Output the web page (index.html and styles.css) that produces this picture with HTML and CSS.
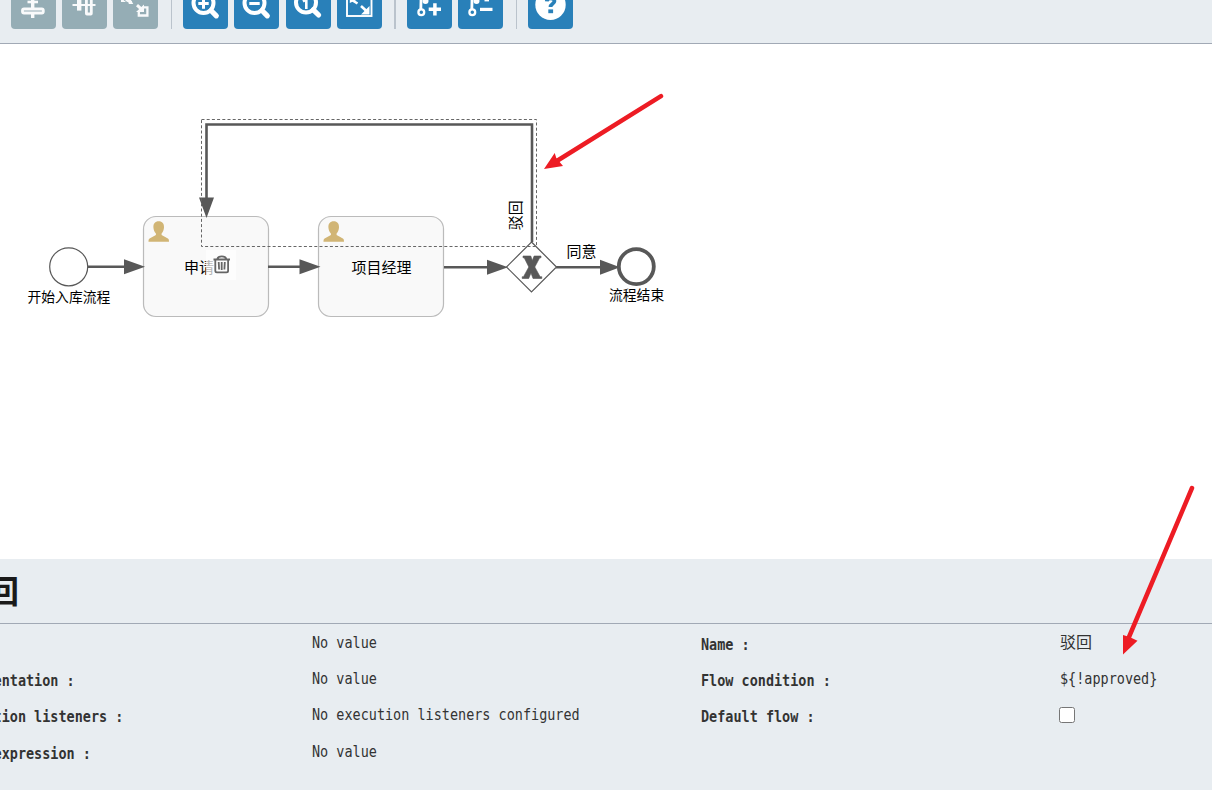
FILE: index.html
```html
<!DOCTYPE html>
<html lang="zh">
<head>
<meta charset="utf-8">
<title>Process editor</title>
<link rel="stylesheet" href="styles.css">
</head>
<body>
<div class="app">
  <header class="toolbar">
    <div class="group group-align">
      <button class="tool disabled"><svg viewBox="0 0 45 45"><path d="M21.700 14v20" stroke-width="3.400"/><path d="M16.500 18h10.500" stroke-width="2.600"/><rect x="11.500" y="25" width="20.800" height="4" rx="1.500" stroke-width="2.800" class="hole"/></svg></button>
      <button class="tool disabled"><svg viewBox="0 0 45 45"><path d="M10.500 21h23" stroke-width="2"/><path d="M17.200 10v16.600" stroke-width="4.400"/><path d="M24.400 10v19.500q0 .5.500.5h3.900q.5 0 .5-.5V10" stroke-width="2.800"/></svg></button>
      <button class="tool disabled"><svg viewBox="0 0 45 45"><path d="M30.500 23.300h3.900v8.200h-8.600v-4" stroke-width="2.300"/><path d="M13 15.500l5.500 3M24 21.200l5 4.500" stroke-width="3"/><path class="solid" d="M31 20.500V28h-8zM15.700 12.500V20h4.600zM8 14v4h5z"/></svg></button>
    </div>
    <div class="group group-zoom">
      <button class="tool"><svg viewBox="0 0 45 45"><circle cx="20.500" cy="19" r="10" stroke-width="4"/><path d="M28 26.500l5.300 5.300" stroke-width="5.200" stroke-linecap="round"/><path d="M15.300 19.500h10.400M20.500 14.500v10.300" stroke-width="3"/></svg></button>
      <button class="tool"><svg viewBox="0 0 45 45"><circle cx="20.500" cy="19" r="10" stroke-width="4"/><path d="M28 26.500l5.300 5.300" stroke-width="5.200" stroke-linecap="round"/><path d="M15.300 19.500h10.400" stroke-width="3"/></svg></button>
      <button class="tool"><svg viewBox="0 0 45 45"><circle cx="20" cy="18.500" r="10" stroke-width="4"/><path d="M27.300 25.800l5.300 5.200" stroke-width="5.200" stroke-linecap="round"/><path d="M17 17.500l3.300-2v9.500" stroke-width="2.600"/></svg></button>
      <button class="tool"><svg viewBox="0 0 45 45"><rect x="10" y="9" width="24.500" height="23" stroke-width="1.900"/><path d="M14 15.500l6.500 4M24 22l6 5.500" stroke-width="2.600"/><path class="solid" d="M32.500 22v8.500H24zM12.800 11.500V19l6.500-3z"/></svg></button>
    </div>
    <div class="group group-bend">
      <button class="tool"><svg viewBox="0 0 45 45"><circle cx="14.300" cy="28.300" r="2.900" stroke-width="2.300"/><path d="M13.800 25.600l.2-8V12" stroke-width="2.800"/><circle cx="18.500" cy="17" r="3" class="solid"/><path d="M21.700 25.300H34M27.900 19.200v12.200" stroke-width="3.500"/></svg></button>
      <button class="tool"><svg viewBox="0 0 45 45"><circle cx="14.300" cy="28.300" r="2.900" stroke-width="2.300"/><path d="M13.800 25.600l.2-8V12" stroke-width="2.800"/><circle cx="18.500" cy="17" r="3" class="solid"/><path d="M22 25.400h12.500" stroke-width="3.200"/><path d="M26.500 16.200h4.500" stroke-width="2.400"/></svg></button>
    </div>
    <div class="group">
      <button class="tool"><svg viewBox="0 0 45 45"><circle cx="22.500" cy="20.700" r="15.200" class="solid"/><path d="M18.800 17.300c.2-4 7.600-4.100 7.600 0 0 2.600-3.900 2.300-3.900 5.800" class="mark"/><path d="M20.300 27.300h4.800" class="mark"/></svg></button>
    </div>
  </header>

  <main class="canvas">
    <svg class="diagram" viewBox="0 44 1212 515">
      <defs>
        <g id="user"><path d="M10.500 0c3.600 0 5.500 2.400 5.300 6-.1 2.500-.9 4.800-2.400 6.300v1.500l6.300 3.400c.8.400 1.100 1.400 1.100 3.300H.3c0-1.900.3-2.900 1.100-3.300l6.300-3.400v-1.500C6.200 10.800 5.300 8.500 5.200 6 5 2.400 6.900 0 10.500 0z"/></g>
      </defs>
      <g class="task"><rect x="143.500" y="216.500" width="125" height="100" rx="12.500"/><rect x="318.500" y="216.500" width="125" height="100" rx="12.500"/></g>
      <g class="user"><use href="#user" x="148.200" y="221.300"/><use href="#user" x="323.200" y="221.300"/></g>
      <g class="flow">
        <path d="M88 266.800h38M268 266.800h34M444 267.300h46M556 267.300h46"/>
        <path d="M532 242V124.500H206.500V200"/>
      </g>
      <g class="heads">
        <path d="M124 259.300l21 7.500-21 7.500zM299.500 259.300l21 7.500-21 7.500zM487 259.800l21 7.500-21 7.500zM600 259.800l20 7.500-20 7.500zM199 197.500h15l-7.500 20.500z"/>
      </g>
      <circle class="start" cx="68.700" cy="266.800" r="19"/>
      <path class="gateway" d="M531.500 242l25 25-25 25-25-25z"/>
      <rect class="selection" x="201.500" y="119.500" width="335" height="127"/>
      <path class="cross" d="M523 256h7.800l1.500 4.600 1.800-4.600h6.900v1.800h-1.300l-4.900 9.200 5.300 9.700h1.700v1.800h-8.800l-2-5.600-2.300 5.600h-6.500v-1.800h1.300l5.300-9.700-4.600-9.200H523z"/>
      <circle class="end" cx="636.300" cy="266.600" r="17.500"/>
      <g class="names">
        <text x="184" y="272.600">申请</text>
        <text x="351.500" y="272.600">项目经理</text>
        <text x="566.500" y="256.600">同意</text>
        <text x="27.500" y="301.500" class="small">开始入库流程</text>
        <text x="609" y="299.600" class="small">流程结束</text>
        <text transform="translate(520.800 230.300) rotate(-90)">驳回</text>
      </g>
      <rect class="veil" x="206" y="250" width="30" height="30"/>
      <g class="trash"><path d="M213.500 259.500h16.500M217.300 259c1-3.400 8-3.400 9 0M215.300 260.500v10.200c0 1 .6 1.600 1.600 1.600h9.600c1 0 1.600-.6 1.600-1.600v-10.200M218.700 262l.4 7.500M221.700 262v8M224.800 262l-.4 7.500"/></g>
    </svg>
  </main>

  <section class="panel">
    <h2 class="title">驳回</h2>
    <div class="props">
      <div class="label"><span>Id :</span></div><div class="value"><span>No value</span></div>
      <div class="label"><span>Name :</span></div><div class="value cjk">驳回</div>
      <div class="label"><span>Documentation :</span></div><div class="value"><span>No value</span></div>
      <div class="label"><span>Flow condition :</span></div><div class="value"><span>${!approved}</span></div>
      <div class="label"><span>Execution listeners :</span></div><div class="value"><span>No execution listeners configured</span></div>
      <div class="label"><span>Default flow :</span></div><div class="value"><input type="checkbox" class="check"></div>
      <div class="label"><span>Skip expression :</span></div><div class="value"><span>No value</span></div>
    </div>
  </section>

  <svg class="notes" viewBox="0 0 1212 790">
    <path d="M661 96.200L556 161.500M1192 488L1129 637"/>
    <path class="tip" d="M544 169l10.700-16 1.600 5 6.700 8zM1123 654.500v-19.500l6.500 2 8 3.800z"/>
  </svg>
</div>
</body>
</html>
```
FILE: styles.css
```css
* { box-sizing: border-box; }

body {
  margin: 0;
  font-family: "Noto Sans CJK SC", sans-serif;
  background: #fff;
}

.app {
  position: relative;
  display: flex;
  flex-direction: column;
  width: 1212px;
  height: 790px;
  overflow: hidden;
}

.toolbar {
  display: flex;
  flex: none;
  align-items: flex-end;
  height: 44px;
  padding: 0 0 14px 11px;
  overflow: hidden;
  background: #e8edf1;
  border-bottom: 1px solid #a1a9b5;
}

.group {
  display: flex;
  flex: none;
  gap: 6px;
}

.group-align,
.group-zoom,
.group-bend {
  padding-right: 13px;
  margin-right: 11px;
  border-right: 1px solid #bac3cc;
}

.group-zoom {
  gap: 6.33px;
  padding-right: 12px;
  border-right-width: 2px;
}

.tool {
  width: 45px;
  height: 45px;
  padding: 0;
  background: #2980b9;
  border: 0;
  border-radius: 4px;
}

.tool.disabled { background: #95adb5; }
.tool.disabled svg { opacity: .95; }

.tool svg {
  display: block;
  width: 45px;
  height: 45px;
  fill: none;
  stroke: #fff;
}

.tool .hole { fill: #95adb5; }
.tool .solid { fill: #fff; stroke: none; }
.tool .mark { stroke: #2980b9; stroke-width: 3.8; }

.canvas {
  flex: none;
  height: 515px;
}

.diagram {
  display: block;
  width: 1212px;
  height: 515px;
}

.task { fill: #f9f9f9; stroke: #bbb; stroke-width: 1.2; }
.user { fill: #d1b575; }
.flow { fill: none; stroke: #585858; stroke-width: 2.6; }
.heads, .cross { fill: #585858; }
.cross { stroke: #585858; stroke-width: .6; }
.selection { fill: none; stroke: #666; stroke-dasharray: 3 2.2; }
.start { fill: #fff; stroke: #585858; stroke-width: 1.2; }
.gateway { fill: #fff; stroke: #585858; stroke-width: 1.2; }
.end { fill: #fff; stroke: #585858; stroke-width: 3.8; }
.names { font-size: 15px; fill: #000; }
.names .small { font-size: 13.8px; }
.veil { fill: #fff; opacity: .7; }
.trash { fill: none; stroke: #666; stroke-width: 1.8; }

.panel {
  flex: none;
  height: 231px;
  background: #e8edf1;
}

.title {
  height: 65px;
  margin: 0;
  padding-left: 1px;
  border-bottom: 1px solid #a1a9b5;
  color: #1a1a1a;
  font-size: 32px;
  line-height: 60px;
  text-indent: -46px;
}

.props {
  display: grid;
  grid-template-columns: 359px 389px 359px 200px;
  grid-auto-rows: 36.2px;
  margin-left: -47px;
  font: 15.8px "DejaVu Sans Mono", monospace;
  color: #333;
}

.label, .value { line-height: 37px; white-space: nowrap; }
.label { padding-top: 2px; font-weight: bold; }

.label span, .value span {
  display: inline-block;
  transform: scaleX(.853);
  transform-origin: left;
}

.cjk { font: 16px/34px "Noto Sans CJK SC", sans-serif; }

.check {
  display: block;
  width: 16px;
  height: 16px;
  margin: 11px 0 0 -1px;
}

/* Annotation arrows lie over the canvas and the property panel. */
.notes {
  position: absolute;
  inset: 0;
  width: 1212px;
  height: 790px;
  pointer-events: none;
  fill: none;
  stroke: #ed1c24;
  stroke-width: 4.5;
  stroke-linecap: round;
}

.notes .tip { fill: #ed1c24; stroke: none; }
```
